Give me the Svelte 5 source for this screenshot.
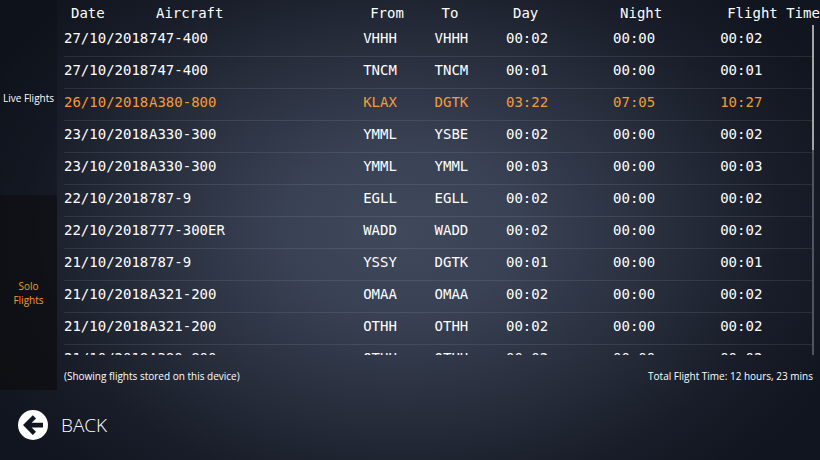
<script>
  const columns = ["Date", "Aircraft", "From", "To", "Day", "Night", "Flight Time"];

  const flights = [
    { date: "27/10/2018", aircraft: "747-400", from: "VHHH", to: "VHHH", day: "00:02", night: "00:00", total: "00:02" },
    { date: "27/10/2018", aircraft: "747-400", from: "TNCM", to: "TNCM", day: "00:01", night: "00:00", total: "00:01" },
    { date: "26/10/2018", aircraft: "A380-800", from: "KLAX", to: "DGTK", day: "03:22", night: "07:05", total: "10:27" },
    { date: "23/10/2018", aircraft: "A330-300", from: "YMML", to: "YSBE", day: "00:02", night: "00:00", total: "00:02" },
    { date: "23/10/2018", aircraft: "A330-300", from: "YMML", to: "YMML", day: "00:03", night: "00:00", total: "00:03" },
    { date: "22/10/2018", aircraft: "787-9", from: "EGLL", to: "EGLL", day: "00:02", night: "00:00", total: "00:02" },
    { date: "22/10/2018", aircraft: "777-300ER", from: "WADD", to: "WADD", day: "00:02", night: "00:00", total: "00:02" },
    { date: "21/10/2018", aircraft: "787-9", from: "YSSY", to: "DGTK", day: "00:01", night: "00:00", total: "00:01" },
    { date: "21/10/2018", aircraft: "A321-200", from: "OMAA", to: "OMAA", day: "00:02", night: "00:00", total: "00:02" },
    { date: "21/10/2018", aircraft: "A321-200", from: "OTHH", to: "OTHH", day: "00:02", night: "00:00", total: "00:02" },
    { date: "21/10/2018", aircraft: "A380-800", from: "OTHH", to: "OTHH", day: "00:02", night: "00:00", total: "00:02" }
  ];

  let tab = $state("solo");
  let selected = $state(2);
</script>

<div class="page">
  <div class="logbook">
    <nav class="tabs">
      <button class:active={tab === "live"} onclick={() => (tab = "live")}>Live Flights</button>
      <button class:active={tab === "solo"} onclick={() => (tab = "solo")}>Solo<br />Flights</button>
    </nav>

    <main>
      <table>
        <thead>
          <tr>
            {#each columns as column}
              <th scope="col">{column}</th>
            {/each}
          </tr>
        </thead>
        <tbody>
          {#each flights as flight, i}
            <tr class:selected={selected === i} onclick={() => (selected = i)}>
              <td>{flight.date}</td>
              <td>{flight.aircraft}</td>
              <td>{flight.from}</td>
              <td>{flight.to}</td>
              <td>{flight.day}</td>
              <td>{flight.night}</td>
              <td>{flight.total}</td>
            </tr>
          {/each}
        </tbody>
      </table>
      <div class="scrollbar"></div>

      <div class="summary">
        <p>(Showing flights stored on this device)</p>
        <p>Total Flight Time: 12 hours, 23 mins</p>
      </div>
    </main>
  </div>

  <footer>
    <button class="back">
      <svg viewBox="0 0 30 30" aria-hidden="true">
        <circle cx="15" cy="15" r="15" fill="#fff" />
        <path d="M5 15 14.8 5.2 18 8.4 13.6 12.8H25v4.6H13.6L18 21.8 14.8 25Z" fill="#10141f" />
      </svg>
      BACK
    </button>
  </footer>
</div>

<style>
  :global(body) {
    margin: 0;
    background: #10131e;
  }

  .page {
    --orange: #f39c38;
    --header: 25px;
    --summary: 35px;
    height: 100vh;
    display: flex;
    flex-direction: column;
    overflow: hidden;
    color: #fff;
    font-family: "Open Sans", "Noto Sans", sans-serif;
    background: radial-gradient(ellipse 58% 72% at 49% 50%, #40485c 0%, #394154 25%, #262c3a 58%, #191d29 80%, #11151f 100%);
  }

  .logbook {
    flex: 1;
    display: flex;
    min-height: 0;
  }

  button {
    border: 0;
    padding: 0;
    background: none;
    color: inherit;
    font-family: inherit;
    cursor: pointer;
  }

  .tabs {
    flex: none;
    width: 57px;
    display: flex;
    flex-direction: column;

    & button {
      flex: 1;
      background: rgba(10, 14, 20, .35);
      font-size: 10px;
      line-height: 14px;
    }

    & button.active {
      background: rgba(12, 13, 16, .75);
      color: var(--orange);
    }
  }

  main {
    position: relative;
    flex: 1;
    min-width: 0;
    display: flex;
    flex-direction: column;
    padding: 0 7px;
  }

  table {
    flex: 1;
    min-height: 0;
    display: flex;
    flex-direction: column;
    font-family: "DejaVu Sans Mono", monospace;
    font-size: 14px;
  }

  thead {
    display: block;
    height: var(--header);
  }

  tbody {
    flex: 1;
    min-height: 0;
    display: block;
    overflow-y: auto;
    scrollbar-width: none;
  }

  tr {
    display: grid;
    grid-template-columns: 85px 30fr 10fr 10fr 15fr 15fr 13fr;
    line-height: 26px;
  }

  th {
    min-width: 0;
    padding: 0 0 0 7px;
    font-weight: 400;
    line-height: 27px;
    text-align: left;
    white-space: nowrap;
  }

  td {
    min-width: 0;
    padding: 0 0 5px;
    border-bottom: 1px solid rgba(255, 255, 255, .09);
    white-space: nowrap;
  }

  .selected {
    color: var(--orange);
  }

  /* slim scroll indicator over the right edge of the list */
  .scrollbar {
    position: absolute;
    top: var(--header);
    right: 6px;
    bottom: var(--summary);
    width: 2px;
    background: linear-gradient(#a3a4a9 38%, #50545f 38%);
  }

  .summary {
    display: flex;
    justify-content: space-between;
    height: var(--summary);
    font-size: 10px;
    line-height: 43px;

    & p {
      margin: 0;
    }
  }

  footer {
    flex: none;
    display: flex;
    align-items: center;
    height: 70px;
    padding-left: 18px;
  }

  .back {
    display: flex;
    align-items: center;
    gap: 13px;
    font-size: 19px;
    font-weight: 300;
    line-height: 32px;

    & svg {
      width: 30px;
      height: 30px;
    }
  }
</style>
